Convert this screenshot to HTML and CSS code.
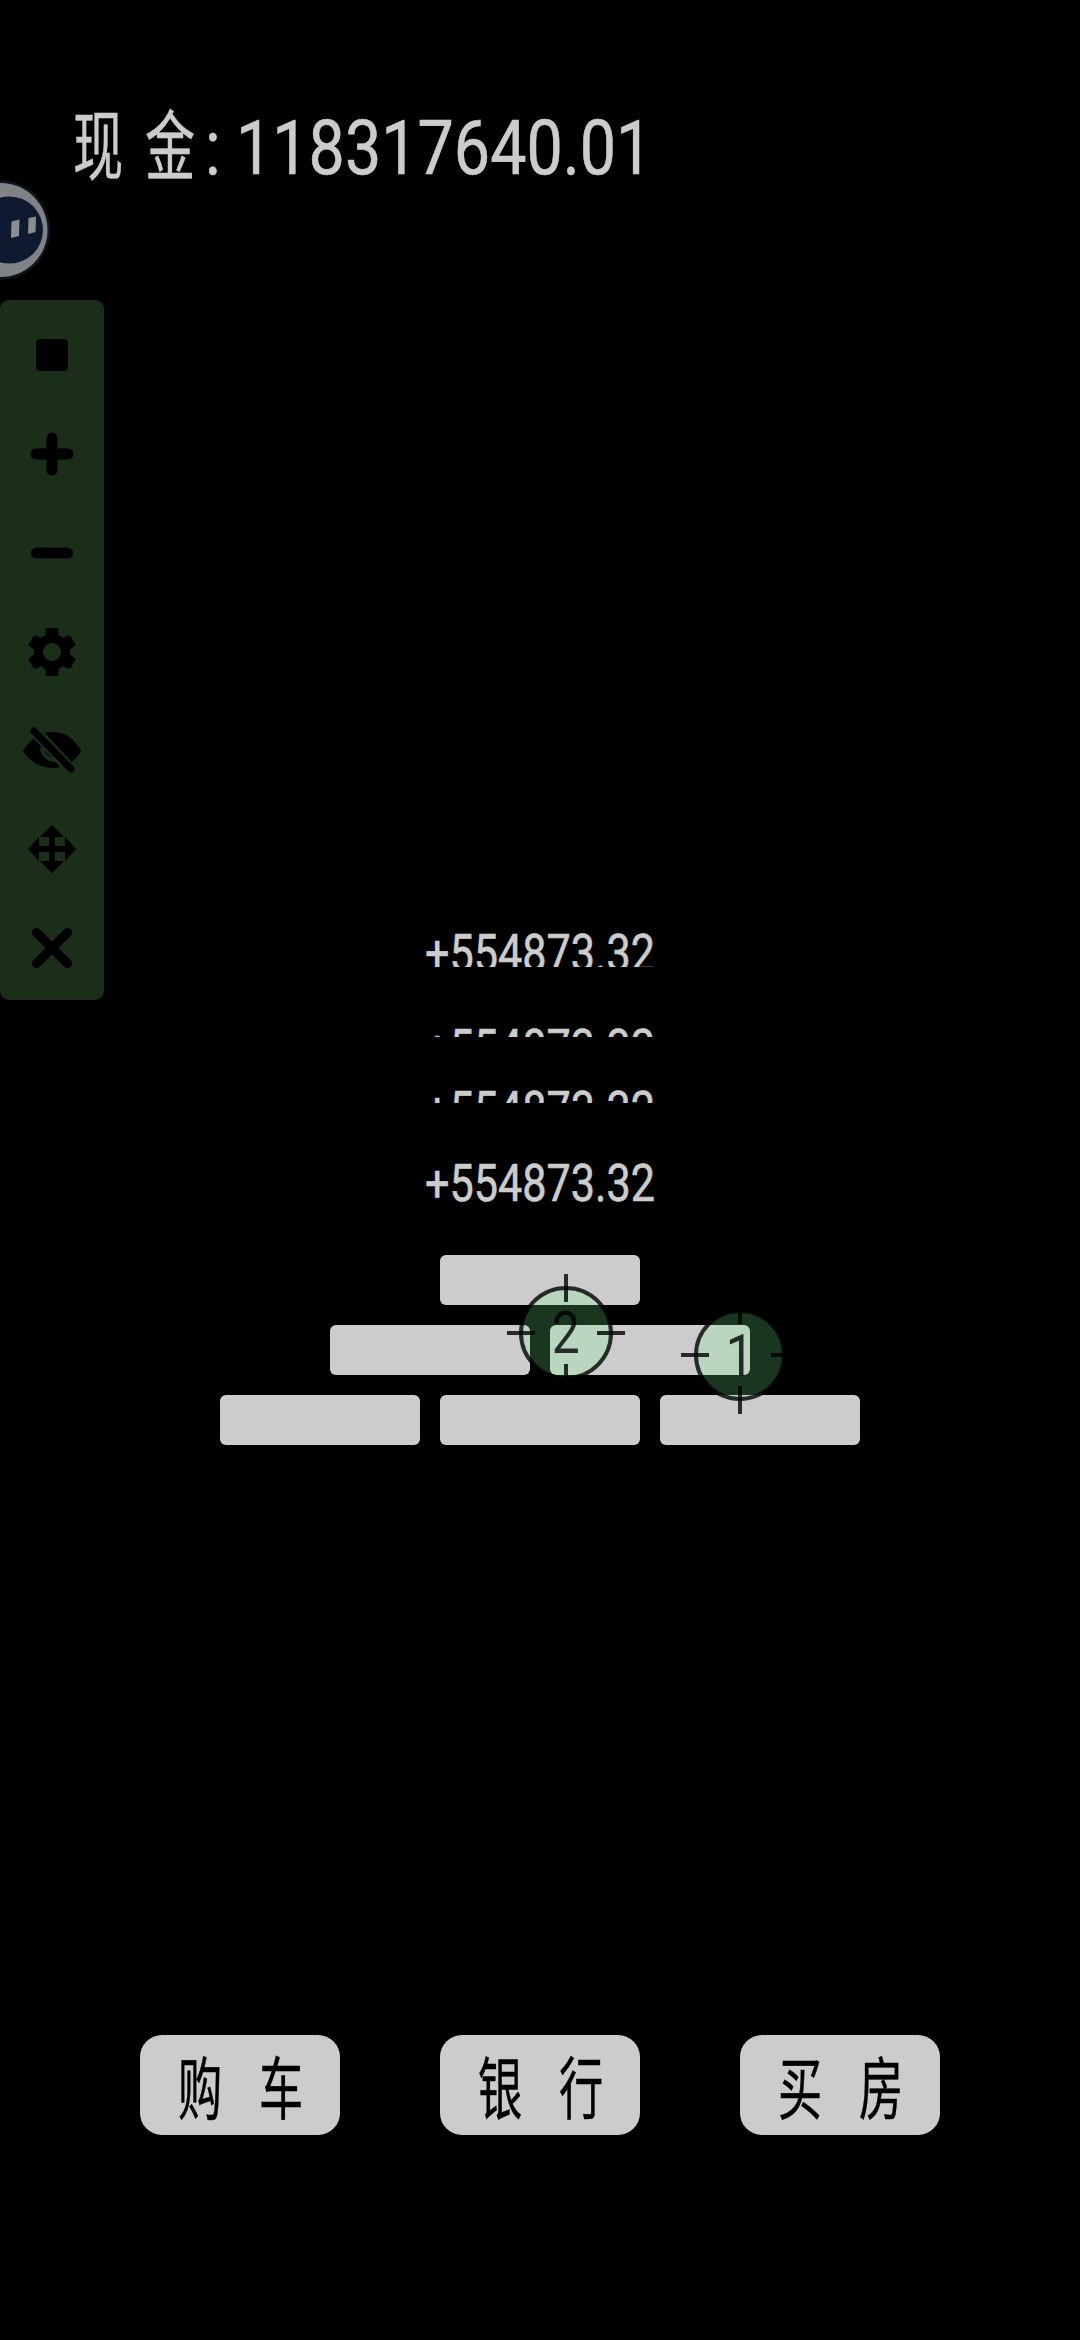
FILE: index.html
```html
<!DOCTYPE html>
<html lang="zh">
<head>
  <meta charset="UTF-8" />
  <title>现金</title>
  <link rel="stylesheet" href="styles.css">
</head>
<body>
  <div class="screen">
    <div class="cash">
      <span class="cash-ch">现</span>
      <span class="cash-ch">金</span>
      <span class="cash-num">:</span>
      <span class="cash-num cash-value">118317640.01</span>
    </div>

    <svg class="bot" viewBox="0 0 50 100">
      <circle cx="0.5" cy="50" r="49.5" fill="#10151f"/>
      <circle cx="0.5" cy="50" r="47" fill="#808386"/>
      <circle cx="9.5" cy="50" r="33.5" fill="#0f1a30"/>
      <path d="M11.500 41.500L19.500 39.500L19 56L11 58Z" fill="#8b8e91"/>
      <path d="M28.500 38L36 36.500L35.500 52L28 54Z" fill="#8b8e91"/>
    </svg>

    <div class="panel">
      <div class="tool">
        <svg viewBox="0 0 60 60"><rect x="14" y="14" width="32" height="32" rx="4"/></svg>
      </div>
      <div class="tool">
        <svg viewBox="0 0 60 60"><path class="line" d="M30 14V46M14 30H46"/></svg>
      </div>
      <div class="tool">
        <svg viewBox="0 0 60 60"><path class="line" d="M14.500 30H45.500"/></svg>
      </div>
      <div class="tool">
        <svg viewBox="0 0 24 24"><path d="M19.14 12.94c.04-.3.06-.61.06-.94 0-.32-.02-.64-.07-.94l2.03-1.58c.18-.14.23-.41.12-.61l-1.92-3.32c-.12-.22-.37-.29-.59-.22l-2.39.96c-.5-.38-1.03-.7-1.62-.94l-.36-2.54c-.04-.24-.24-.41-.48-.41h-3.84c-.24 0-.43.17-.47.41l-.36 2.54c-.59.24-1.13.57-1.62.94l-2.39-.96c-.22-.08-.47 0-.59.22L2.74 8.87c-.12.21-.08.47.12.61l2.03 1.58c-.05.3-.09.63-.09.94s.02.64.07.94l-2.03 1.58c-.18.14-.23.41-.12.61l1.92 3.32c.12.22.37.29.59.22l2.39-.96c.5.38 1.03.7 1.62.94l.36 2.54c.05.24.24.41.48.41h3.84c.24 0 .44-.17.47-.41l.36-2.54c.59-.24 1.13-.56 1.62-.94l2.39.96c.22.08.47 0 .59-.22l1.92-3.32c.12-.22.07-.47-.12-.61l-2.01-1.58zM12 15.6c-1.98 0-3.6-1.62-3.6-3.6s1.62-3.6 3.6-3.6 3.6 1.62 3.6 3.6-1.62 3.6-3.6 3.6z"/></svg>
      </div>
      <div class="tool">
        <svg class="wide" viewBox="0 -1 84 84">
          <path d="M13 41C20 29 31 22 43 22C55 22 65 29 71 41C65 52 55 58 43 58C31 58 20 52 13 41Z"/>
          <path class="cut" d="M32 39C33 45 38 50 46 50"/>
          <path class="cut slash-gap" d="M24 20L61 60"/>
          <path class="slash" d="M24 21L61 59"/>
        </svg>
      </div>
      <div class="tool">
        <svg class="wide" viewBox="0 -3 84 84">
          <path d="M42 15L54 27H45V36H55V27L66 39L55 51V42H45V51H54L42 63L30 51H39V42H29V51L18 39L29 27V36H39V27H30Z"/>
        </svg>
      </div>
      <div class="tool">
        <svg viewBox="0 0 60 60"><path class="line line-thin" d="M14.500 14.500L45.500 45.500M45.500 14.500L14.500 45.500"/></svg>
      </div>
    </div>

    <div class="gains">
      <div class="gain gain-a">+554873.32</div>
      <div class="gain gain-b">+554873.32</div>
      <div class="gain gain-c">+554873.32</div>
      <div class="gain gain-d">+554873.32</div>
    </div>

    <div class="bricks">
      <div class="brick-row">
        <div class="brick"></div>
      </div>
      <div class="brick-row">
        <div class="brick"></div>
        <div class="brick"></div>
      </div>
      <div class="brick-row">
        <div class="brick"></div>
        <div class="brick"></div>
        <div class="brick"></div>
      </div>

      <div class="target target-two">
        <svg viewBox="-62 -62 124 124">
          <circle class="ring" r="45"/>
          <path class="ticks" d="M0 -59V-31M0 31V59M-59 0H-31M31 0H59"/>
        </svg>
        <span class="target-num">2</span>
      </div>
      <div class="target target-one">
        <svg viewBox="-62 -62 124 124">
          <circle class="ring" r="44"/>
          <path class="ticks" d="M0 -59V-31M0 31V59M-59 0H-31M31 0H59"/>
        </svg>
        <span class="target-num">1</span>
      </div>
    </div>

    <div class="nav">
      <div class="nav-btn"><span class="nav-ch">购</span><span class="nav-ch">车</span></div>
      <div class="nav-btn"><span class="nav-ch">银</span><span class="nav-ch">行</span></div>
      <div class="nav-btn"><span class="nav-ch">买</span><span class="nav-ch">房</span></div>
    </div>
  </div>
</body>
</html>
```

FILE: styles.css
```css
body {
  margin: 0;
  background-color: #000;
  font-family: Roboto, "Noto Sans CJK SC", sans-serif;
}
.screen {
  position: relative;
  width: 1080px;
  height: 2340px;
  overflow: hidden;
  background-color: #000;
}

.cash {
  display: flex;
  align-items: baseline;
  padding: 103px 0 0 73px;
  font-size: 76px;
  line-height: 76px;
  color: #ccc;
}
.cash-ch {
  display: inline-block;
  width: 50px;
  margin-right: 22px;
  font-family: "Noto Sans CJK SC", sans-serif;
  transform: scaleX(0.66);
  transform-origin: left center;
  -webkit-text-stroke: 0.5px #ccc;
}
.cash-num {
  display: inline-block;
  transform: scaleX(0.85);
  transform-origin: left center;
  -webkit-text-stroke: 0.6px #ccc;
}
.cash-ch + .cash-num {
  margin-left: -12px;
}
.cash-value {
  margin-left: 13px;
}

.bot {
  position: absolute;
  left: 0;
  top: 180px;
  width: 50px;
  height: 100px;
}

.panel {
  position: absolute;
  left: 0;
  top: 300px;
  width: 104px;
  height: 700px;
  padding-top: 6px;
  box-sizing: border-box;
  background-color: #1a2e1a;
  border-radius: 9px;
}
.tool {
  display: flex;
  align-items: center;
  justify-content: center;
  height: 98.8px;
}
.tool svg {
  width: 60px;
  height: 60px;
  fill: #000;
}
.tool svg.wide {
  width: 84px;
  height: 84px;
}
.line {
  fill: none;
  stroke: #000;
  stroke-width: 11;
  stroke-linecap: round;
}
.line-thin {
  stroke-width: 9;
}
.cut {
  fill: none;
  stroke: #1a2e1a;
  stroke-width: 4;
  stroke-linecap: round;
}
.slash-gap {
  stroke-width: 12;
  stroke-linecap: butt;
}
.slash {
  fill: none;
  stroke: #000;
  stroke-width: 7;
  stroke-linecap: round;
}

.gains {
  padding-top: 742px;
}
.gain {
  overflow: hidden;
  font-size: 52px;
  line-height: 52px;
  text-align: center;
  color: #ccc;
  transform: scaleX(0.83);
  -webkit-text-stroke: 0.6px #ccc;
}
.gain-a {
  height: 39px;
}
.gain-b {
  height: 14px;
  margin-top: 56px;
}
.gain-c {
  height: 18px;
  margin-top: 48px;
}
.gain-d {
  height: 52px;
  margin-top: 55px;
}

.bricks {
  position: relative;
  display: flex;
  flex-direction: column;
  gap: 20px;
  margin-top: 45px;
}
.brick-row {
  display: flex;
  justify-content: center;
  gap: 20px;
}
.brick {
  width: 200px;
  height: 50px;
  background-color: #ccc;
  border-radius: 6px;
}

.target {
  position: absolute;
  display: flex;
  align-items: center;
  justify-content: center;
  width: 124px;
  height: 124px;
}
.target svg {
  position: absolute;
  inset: 0;
  width: 124px;
  height: 124px;
}
.target-two {
  left: 504px;
  top: 16px;
}
.target-one {
  left: 678px;
  top: 38px;
}
.ring {
  fill: rgba(125, 255, 150, 0.21);
  stroke: rgba(0, 0, 0, 0.8);
  stroke-width: 4;
}
.ticks {
  fill: none;
  stroke: rgba(0, 0, 0, 0.8);
  stroke-width: 4;
}
.target-num {
  position: relative;
  font-size: 60px;
  line-height: 60px;
  color: rgba(0, 0, 0, 0.8);
  transform: scaleX(0.83);
}
.target-one .target-num {
  margin-top: 2px;
}

.nav {
  display: flex;
  justify-content: center;
  gap: 100px;
  margin-top: 590px;
}
.nav-btn {
  display: flex;
  align-items: center;
  justify-content: center;
  gap: 37px;
  width: 200px;
  height: 100px;
  background-color: #ccc;
  border-radius: 22px;
}
.nav-ch {
  display: inline-block;
  width: 44px;
  font-family: "Noto Sans CJK SC", sans-serif;
  font-size: 68px;
  line-height: 68px;
  color: #000;
  transform: scaleX(0.65);
  transform-origin: left center;
  -webkit-text-stroke: 0.5px #000;
}
```
